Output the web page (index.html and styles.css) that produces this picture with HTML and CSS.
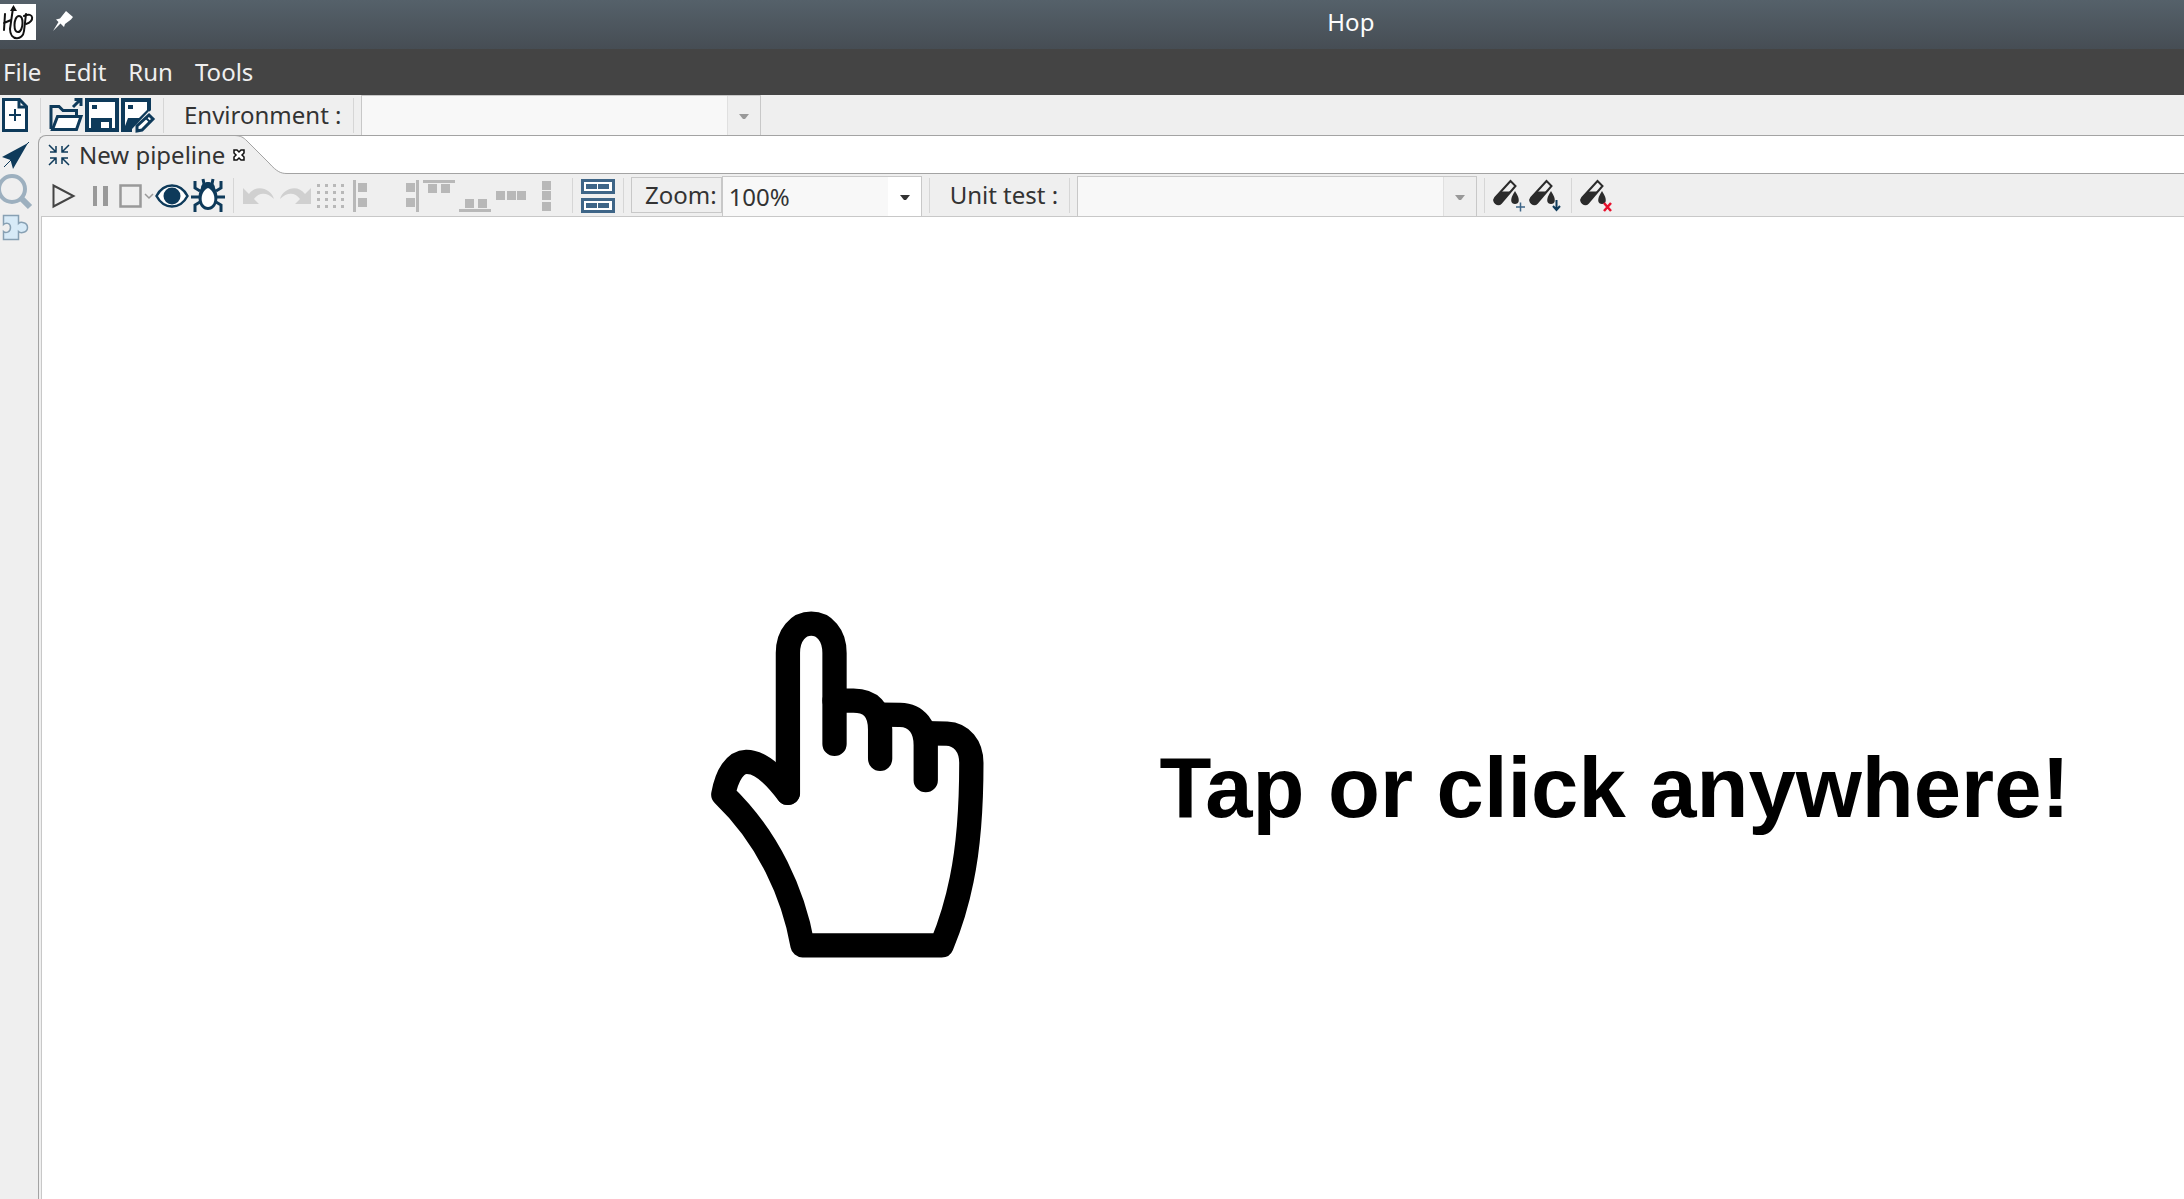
FILE: index.html
```html
<!DOCTYPE html>
<html lang="en">
<head>
<meta charset="utf-8">
<title>Hop</title>
<link rel="stylesheet" href="styles.css">
</head>
<body>
<header class="titlebar">
  <div class="title-left">
    <svg class="logo" viewBox="0 0 36 36" aria-label="Hop logo" role="img">
      <rect width="36" height="36" fill="#fff"/>
      <g fill="none" stroke="#111" stroke-width="2" stroke-linecap="round" stroke-linejoin="round">
        <path d="M5 10 4 26M4 19 11 16M13 4 10 25C10 37 23 37 24 27L26 10"/>
        <path d="M19 12c-3 0-4.500 5-4.500 9s1 7 3.500 7c3 0 4.500-5 4.500-9s-1-7-3.500-7zM24 12c10-5 11 6 2 8"/>
      </g>
      <path d="M13.500 1 17 7H10z" fill="#111"/>
    </svg>
    <svg class="pin" viewBox="0 0 22 22" aria-hidden="true"><path d="M14 1 21 7 19 9.500 13 14 12 17 8.500 13.500 1 21 6.500 12 4 9.500 8 8.500Z" fill="#fff"/></svg>
  </div>
  <h1 class="title">Hop</h1>
</header>

<nav class="menubar">
  <button class="menu">File</button><button class="menu">Edit</button><button class="menu">Run</button><button class="menu">Tools</button>
</nav>

<div class="toolbar main-toolbar">
  <button class="tool first" aria-label="New"><svg viewBox="0 0 33 36"><path d="M3.500 2.500h16l7 7v24h-23z" fill="#fff" stroke="#0e3a5a" stroke-width="3"/><path d="M19 2v8h8" fill="none" stroke="#0e3a5a" stroke-width="3"/><path d="M9 18h12M15 12v12" stroke="#0e3a5a" stroke-width="2"/></svg></button>
  <span class="sep"></span>
  <button class="tool" aria-label="Open"><svg viewBox="0 0 36 36" fill="none" stroke="#0e3a5a" stroke-width="3"><path d="M3 32V9.500h8l4 4h13.500v5"/><path d="M9.500 19.500H33l-4.500 13H4.500z" fill="#fff"/><path d="M25 10 33 2M26.500 2.500H33V9"/></svg></button>
  <button class="tool" aria-label="Save"><svg viewBox="0 0 36 36"><path d="M1 1h34v34H1z" fill="#0e3a5a"/><path d="M5 5h26v26H5z" fill="#fff"/><path d="M8 8h5v4H8zM7 21h21v11H7z" fill="#0e3a5a"/><path d="M17 25h8v6h-8z" fill="#fff"/></svg></button>
  <button class="tool" aria-label="Save as"><svg viewBox="0 0 36 36"><path d="M1 1h30v12L13 35H1z" fill="#0e3a5a"/><path d="M5 5h22v8l-8 8H8L5 29z" fill="#fff"/><path d="M8 8h5v4H8z" fill="#0e3a5a"/><path d="M29 14 12 32v5h9l15-17z" fill="#efefef"/><path d="m29 18 4 4-11 11-5 1v-5z" fill="#fff" stroke="#0e3a5a" stroke-width="3"/><path d="m26 21 4 4" stroke="#0e3a5a" stroke-width="2"/></svg></button>
  <span class="sep"></span>
  <label class="label" for="env">Environment :</label>
  <span class="sep"></span>
  <span class="combo disabled"><select id="env" disabled><option></option></select><svg class="arrow" viewBox="0 0 10 6"><path d="M0 0h10L6 5H4z"/></svg></span>
</div>

<div class="workspace">
  <aside class="sidebar">
    <button class="side" aria-label="Data orchestration"><svg viewBox="0 0 36 36"><path d="M28 5 13 31 10.500 22 2 19z" fill="#0e3a5a"/><path d="M29 4 4 29" stroke="#0e3a5a"/></svg></button>
    <button class="side" aria-label="Search"><svg viewBox="0 0 36 36" fill="none" stroke="#9db0bf"><circle cx="12" cy="15" r="13" stroke-width="4"/><path d="m21 24 9 9" stroke-width="6"/></svg></button>
    <button class="side" aria-label="Plugins"><svg viewBox="0 0 36 36"><path d="M3.500 5.500h15v8c2-2 9-1.500 9 4s-7 6-9 4v8h-15v-8c2 2 7 1 7-4s-5-5-7-3z" fill="#d7eaf7" stroke="#87a0b3" stroke-width="1.500"/></svg></button>
  </aside>

  <main class="folder">
    <div class="tabs">
      <div class="tab">
        <svg class="tab-icon" viewBox="0 0 24 24" fill="none" stroke="#0e3a5a" stroke-width="1.500"><path d="m2 2 7 7M3 9h6V3M22 2l-7 7M15 3v6h6M2 22l7-7M3 15h6v6M22 22l-7-7M21 15h-6v6"/></svg>
        <span>New pipeline</span>
        <button class="close" aria-label="Close"><svg viewBox="0 0 12 12"><path d="M1 1h3l2 2 2-2h3v3L9 6l2 2v3H8L6 9l-2 2H1V8l2-2-2-2z" fill="#fff" stroke="#111" stroke-width="1.500"/></svg></button>
      </div>
      <svg class="tab-edge" viewBox="0 0 52 39"><path d="M0 0C6 1 8 2 12 6L34 28C42 37 46 38 52 38.500V39H0z" fill="#efefef"/><path d="M0 .5H52M0 .5C6 1 8 2 12 6L34 28C42 37 46 38.500 52 38.500" fill="none" stroke="#a3a3a3"/></svg>
      <div class="tab-rest"></div>
    </div>

    <div class="toolbar pipe-toolbar">
      <button class="tool" aria-label="Run"><svg viewBox="0 0 36 36"><path d="M7.500 8.500v21l20-10.500z" fill="none" stroke="#444" stroke-width="2"/></svg></button>
      <button class="tool" aria-label="Pause"><svg viewBox="0 0 36 36"><path d="M11 9h4v20h-4zM21 9h5v20h-5z" fill="#999"/></svg></button>
      <button class="tool" aria-label="Stop"><svg viewBox="0 0 36 36" fill="none" stroke="#999"><path d="M2.500 8.500h20v21h-20z" stroke-width="2.500"/><path d="m27 17 4 4 4-4" stroke-width="1.500"/></svg></button>
      <button class="tool" aria-label="Preview"><svg viewBox="0 0 36 36"><path d="M2.500 19C10 5 26 5 33.500 19 26 33 10 33 2.500 19z" fill="#fff" stroke="#0e3a5a" stroke-width="2.500"/><circle cx="18" cy="19" r="8.500" fill="#0e3a5a"/></svg></button>
      <button class="tool" aria-label="Debug"><svg viewBox="0 0 36 36"><g fill="none" stroke="#0e3a5a" stroke-width="3"><path d="M10 14 5 11V4M26 14l5-3V4M10 20H1M26 20h9M10 25l-5 3v7M26 25l5 3v7M14 7 13 2M22 7l1-5"/></g><path d="M11 11c0-8 14-8 14 0 5 9 2 22-7 22S6 20 11 11z" fill="#0e3a5a"/><path d="M18 11c9 4 8 19 0 19s-9-15 0-19z" fill="#fff"/></svg></button>
      <span class="sep"></span>
      <button class="tool" aria-label="Undo"><svg viewBox="0 0 36 36"><path d="M2 11v16h16l-5-5c5-7 13-7 20 0-3-11-18-15-25-5z" fill="#d0d0d0"/></svg></button>
      <button class="tool" aria-label="Redo"><svg viewBox="0 0 36 36"><path d="M34 11v16H18l5-5c-5-7-13-7-20 0 3-11 18-15 25-5z" fill="#d0d0d0"/></svg></button>
      <button class="tool" aria-label="Snap to grid"><svg viewBox="0 0 36 36"><path d="M4 8.500h32M4 15.500h32M4 22.500h32M4 29.500h32" stroke="#b8b8b8" stroke-width="3" stroke-dasharray="3 5"/></svg></button>
      <button class="tool" aria-label="Align left"><svg viewBox="0 0 36 36" fill="#b8b8b8"><path d="M4 3h3v32H4zM9 6h9v9H9zM9 21h9v9H9z"/></svg></button>
      <button class="tool" aria-label="Align right"><svg viewBox="0 0 36 36" fill="#b8b8b8"><path d="M31 3h3v32h-3zM21 6h9v9h-9zM21 21h9v9h-9z"/></svg></button>
      <button class="tool" aria-label="Align top"><svg viewBox="0 0 36 36" fill="#b8b8b8"><path d="M2 3h32v3H2zM7 7h9v9H7zM20 7h9v9h-9z"/></svg></button>
      <button class="tool" aria-label="Align bottom"><svg viewBox="0 0 36 36" fill="#b8b8b8"><path d="M2 32h32v3H2zM8 22h9v9H8zM21 22h9v9h-9z"/></svg></button>
      <button class="tool" aria-label="Distribute horizontally"><svg viewBox="0 0 36 36" fill="#b8b8b8"><path d="M3 14h9v9H3zM14 14h9v9h-9zM24 14h9v9h-9z"/></svg></button>
      <button class="tool" aria-label="Distribute vertically"><svg viewBox="0 0 36 36" fill="#b8b8b8"><path d="M13 4h9v9h-9zM13 14h9v9h-9zM13 25h9v9h-9z"/></svg></button>
      <span class="sep"></span>
      <button class="tool" aria-label="Show results"><svg viewBox="0 0 36 36"><path d="M1 2h34v15H1zM1 21h34v15H1z" fill="#3e6587"/><path d="M4 5h28v9H4zM4 24h28v9H4z" fill="#fff"/><path d="M6 7h11v5H6zM18 7h11v5H18zM6 26h11v5H6zM18 26h11v5H18z" fill="#3e6587"/></svg></button>
      <span class="sep"></span>
      <label class="label zoom-label" for="zoom">Zoom:</label>
      <span class="combo zoom-combo"><select id="zoom"><option>100%</option></select><svg class="arrow" viewBox="0 0 10 6"><path d="M0 0h10L6 5H4z"/></svg></span>
      <span class="sep"></span>
      <label class="label" for="unit">Unit test :</label>
      <span class="sep"></span>
      <span class="combo disabled"><select id="unit" disabled><option></option></select><svg class="arrow" viewBox="0 0 10 6"><path d="M0 0h10L6 5H4z"/></svg></span>
      <span class="sep"></span>
      <button class="tool" aria-label="Add unit test"><svg viewBox="0 0 36 36"><use href="#tube"/><path d="M24 30h9M28.500 25.500v9" stroke="#3e6587" stroke-width="1.500"/></svg></button>
      <button class="tool" aria-label="Attach unit test"><svg viewBox="0 0 36 36"><use href="#tube"/><path d="M28.500 23v10M25 29l3.500 4 3.500-4" fill="none" stroke="#0e3a5a" stroke-width="2"/></svg></button>
      <span class="sep"></span>
      <button class="tool" aria-label="Detach unit test"><svg viewBox="0 0 36 36"><use href="#tube"/><path d="m25 26 7 8M32 26l-7 8" stroke="#e8112d" stroke-width="2.500"/></svg></button>
    </div>

    <section class="canvas">
      <svg class="hand" viewBox="87 90 820 1040" aria-hidden="true">
        <g fill="none" stroke="#000" stroke-width="73" stroke-linecap="round" stroke-linejoin="round">
          <path d="M318 635V215C318 160 350 127 388 127C426 127 458 160 458 215V488"/>
          <path d="M458 358H515C565 358 595 385 595 445V533"/>
          <path d="M595 400L655 401C705 402 732 440 732 492V597"/>
          <path d="M732 456L795 457C840 459 869 495 869 545C869 660 860 800 840 895C826 965 806 1030 780 1093H362C335 940 260 770 124 640C135 580 160 543 193 542C235 541 280 585 318 635"/>
        </g>
      </svg>
      <p class="hint">Tap or click anywhere!</p>
    </section>
  </main>
</div>

<svg class="defs" aria-hidden="true">
  <symbol id="tube" viewBox="0 0 36 36">
    <path d="m18.500 4 5 5L9 26c-3 3-9-1-6-5z" fill="#efefef" stroke="#2b2b2b" stroke-width="2"/>
    <path d="M9 15h9L9 26c-3 3-9-1-6-5z" fill="#2b2b2b" stroke="#2b2b2b"/>
    <path d="M23 14c6 9 4 13 0 13s-6-4 0-13z" fill="#2b2b2b"/>
  </symbol>
</svg>
</body>
</html>
```
FILE: styles.css
```css
* { box-sizing: border-box; }

body {
  margin: 0;
  min-height: 100vh;
  display: flex;
  flex-direction: column;
  background: #efefef;
  color: #333;
  font-family: "Noto Sans", sans-serif;
  font-size: 24px;
  line-height: 32px;
}

button, select { font: inherit; color: inherit; }
button { border: 0; padding: 0; background: none; }
svg { display: block; flex: none; }
.defs { position: absolute; width: 0; height: 0; }

.titlebar {
  display: grid;
  grid-template-columns: 1328fr auto 810fr;
  height: 49px;
  background: linear-gradient(#55616a, #464d54);
}
.title-left { display: flex; gap: 16px; padding-top: 4px; }
.logo { width: 36px; height: 36px; }
.pin { width: 22px; height: 22px; margin-top: 6px; }
.title {
  margin: 0;
  padding-top: 6px;
  font-size: 24px;
  font-weight: 400;
  color: #fcfcfc;
}

.menubar {
  display: flex;
  gap: 22px;
  height: 46px;
  padding: 0 3px;
  background: #444;
  color: #efefef;
}

.toolbar { display: flex; align-items: center; }
.main-toolbar { height: 40px; }
.tool { width: 36px; height: 36px; flex: none; }
.tool svg, .side svg { width: 36px; height: 36px; }
.tool.first, .tool.first svg { width: 33px; }
.sep {
  flex: none;
  width: 15px;
  height: 35px;
  border: solid transparent;
  border-width: 0 7px;
  background: #d6d6d6;
  background-clip: padding-box;
}
.label { padding: 0 4px 0 13px; white-space: nowrap; }

.combo {
  position: relative;
  align-self: stretch;
  display: block;
  width: 400px;
  border: 1px solid #c8c8c8;
  border-bottom: 0;
  background: linear-gradient(to left, #fff 33px, #f8f8f8 33px);
}
.combo.disabled { background: linear-gradient(to left, #efefef 32px, #e0e0e0 32px 33px, #f8f8f8 33px); }
.combo select {
  appearance: none;
  display: block;
  width: 100%;
  height: 100%;
  padding: 0 6px;
  border: 0;
  background: none;
  opacity: 1;
}
.arrow {
  position: absolute;
  right: 11px;
  top: 50%;
  width: 10px;
  height: 6px;
  margin-top: -2px;
  fill: #333;
  pointer-events: none;
}
.disabled .arrow { fill: #999; }

.workspace { flex: 1; display: flex; }
.sidebar { width: 38px; flex: none; padding-top: 3px; }
.side { display: block; width: 36px; height: 36px; }

.folder {
  flex: 1;
  min-width: 0;
  display: flex;
  flex-direction: column;
  border: solid #a3a3a3;
  border-width: 1px 0 0 1px;
  border-top-left-radius: 8px;
}
.tabs { display: flex; height: 38px; }
.tab {
  display: flex;
  align-items: center;
  gap: 8px;
  width: 196px;
  padding-left: 8px;
}
.tab-icon { width: 24px; height: 24px; }
.close { position: relative; z-index: 1; }
.close svg { width: 12px; height: 12px; }
.tab span { white-space: nowrap; }
.tab-edge { width: 52px; height: 39px; margin-top: -1px; background: #fff; }
.tab-rest { flex: 1; background: #fff; border-bottom: 1px solid #a3a3a3; }

.pipe-toolbar { height: 42px; padding-left: 7px; }
.zoom-label {
  height: 36px;
  padding-top: 1px;
  border: 1px solid #c8c8c8;
}
.pipe-toolbar .combo { margin-top: 2px; }
.zoom-combo { width: 200px; }

.canvas {
  flex: 1;
  display: grid;
  grid-template-columns: 667fr auto auto 114fr;
  align-items: center;
  margin-left: 2px;
  padding-top: 152px;
  border: solid #c8c8c8;
  border-width: 1px 0 0 1px;
  background: #fff;
}
.hand { grid-column: 2; width: 273px; height: 347px; }
.hint {
  margin: 0 0 0 176px;
  padding-top: 8px;
  font-family: "Liberation Sans", Arial, sans-serif;
  font-size: 85px;
  font-weight: 700;
  line-height: 100px;
  color: #000;
  white-space: nowrap;
}
```
